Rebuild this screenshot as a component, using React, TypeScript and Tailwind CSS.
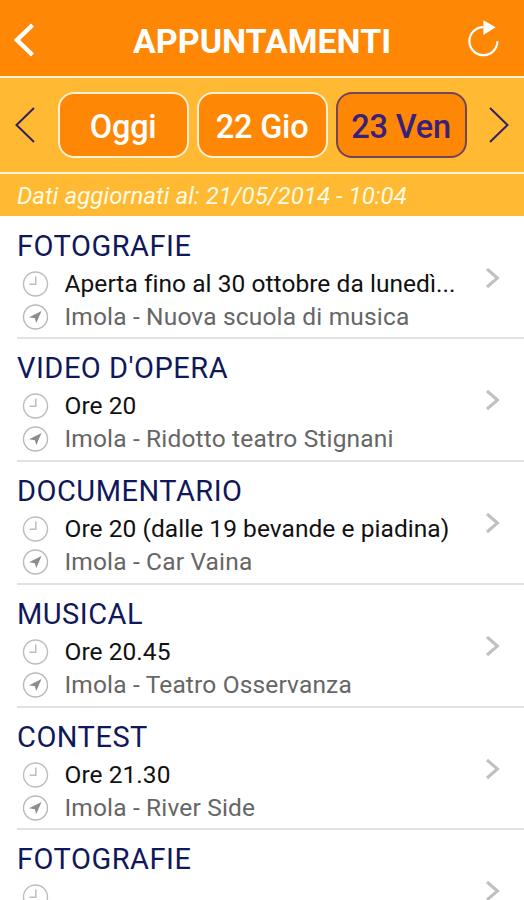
const events = [
  { title: 'FOTOGRAFIE', time: 'Aperta fino al 30 ottobre da lunedì...', place: 'Imola - Nuova scuola di musica' },
  { title: "VIDEO D'OPERA", time: 'Ore 20', place: 'Imola - Ridotto teatro Stignani' },
  { title: 'DOCUMENTARIO', time: 'Ore 20 (dalle 19 bevande e piadina)', place: 'Imola - Car Vaina' },
  { title: 'MUSICAL', time: 'Ore 20.45', place: 'Imola - Teatro Osservanza' },
  { title: 'CONTEST', time: 'Ore 21.30', place: 'Imola - River Side' },
  { title: 'FOTOGRAFIE', time: '', place: '' },
];

const days = [
  { label: 'Oggi', selected: false },
  { label: '22 Gio', selected: false },
  { label: '23 Ven', selected: true },
];

function ClockIcon() {
  return (
    <svg className="ml-[5px] h-[27px] w-[27px] shrink-0" viewBox="0 0 27 27" fill="none" stroke="#bdbdbd">
      <circle cx="13.5" cy="13" r="12" strokeWidth="1.4" />
      <path d="M13.8 5.5V13.3H7.5" strokeWidth="1.5" />
    </svg>
  );
}

function LocationIcon() {
  return (
    <svg className="ml-[5px] h-[27px] w-[27px] shrink-0" viewBox="0 0 27 27">
      <circle cx="13.5" cy="13" r="12" fill="none" stroke="#b9b9b9" strokeWidth="1.4" />
      <path d="M19.5 7L14.3 19L12.8 14.3L7 13.2Z" fill="#8d8d8d" />
    </svg>
  );
}

export default function App() {
  return (
    <div className="flex h-[900px] w-[524px] flex-col overflow-hidden bg-white font-['Roboto',sans-serif]">
      <header className="flex h-[78px] shrink-0 items-center border-b-2 border-[#fff1d0] bg-[#ff8706] pt-1">
        <svg className="ml-3 h-10 w-10" viewBox="0 0 40 40" fill="none" stroke="#fff" strokeWidth="4.5">
          <path d="M20.5 5L5 20L20.5 35" />
        </svg>
        <h1 className="ml-[81px] w-[260px] pt-[2px] text-[34px] leading-10 font-bold text-white">APPUNTAMENTI</h1>
        <svg className="ml-[71px] h-10 w-10" viewBox="0 0 40 40">
          <path d="M33.4 21.2A14 14 0 1 1 19.4 7.2" fill="none" stroke="#fff" strokeWidth="2.2" />
          <path d="M19.4 .3L31.7 7.2L19.4 15Z" fill="#fff" />
        </svg>
      </header>

      <nav className="flex h-[96px] shrink-0 items-center border-b-2 border-[#fff1cf] bg-[#ffb932]">
        <svg className="ml-[14px] h-10 w-[43px]" viewBox="0 0 43 40" fill="none" stroke="#352065" strokeWidth="2">
          <path d="M20 3L2.5 20L20 37" />
        </svg>
        <div className="flex gap-[8px] pb-[1px] pl-[.6px]">
          {days.map((day) => (
            <button
              key={day.label}
              className={`h-[66px] w-[131px] rounded-[16px] border-2 bg-[#ff8706] pt-[5px] text-[32.5px] leading-10 font-medium tracking-[-.2px] ${
                day.selected ? 'border-[#71465a] text-[#3a2078]' : 'border-[#fff0d2] text-white'
              }`}
            >
              {day.label}
            </button>
          ))}
        </div>
        <svg className="ml-5 h-10 w-6" viewBox="0 0 24 40" fill="none" stroke="#352065" strokeWidth="2">
          <path d="M3 3L20.5 20L3 37" />
        </svg>
      </nav>

      <p className="h-[42px] shrink-0 bg-[#ffb932] pl-[17px] text-[24px] leading-[45px] tracking-[.06px] whitespace-nowrap text-[#fffbe2] italic">
        Dati aggiornati al: 21/05/2014 - 10:04
      </p>

      <main className="flex flex-col pt-[.8px]">
        {events.map((event, i) => (
          <article key={i} className="flex h-[122.7px] shrink-0 pl-[17px]">
            <div className="flex grow border-b-2 border-[#e2e2e2] pt-[9px]">
              <div className="w-[440px]">
                <h2 className="mb-[2px] text-[29px] leading-10 tracking-[.5px] whitespace-nowrap text-[#10185c]">{event.title}</h2>
                <div className="flex h-[33px] items-center gap-[15.5px]">
                  <ClockIcon />
                  <span className="pb-[1px] text-[24.5px] leading-[32px] tracking-[.05px] whitespace-nowrap text-[#111]">{event.time}</span>
                </div>
                <div className="flex h-[33px] items-center gap-[15.5px]">
                  <LocationIcon />
                  <span className="pb-[1px] text-[24.5px] leading-[32px] tracking-[.16px] whitespace-nowrap text-[#666]">{event.place}</span>
                </div>
              </div>
              <svg className="mt-[40px] ml-[28px] h-6 w-4" viewBox="0 0 16 24" fill="none" stroke="#c0c0c0" strokeWidth="3">
                <path d="M2 3L12.5 12L2 21" />
              </svg>
            </div>
          </article>
        ))}
      </main>
    </div>
  );
}
